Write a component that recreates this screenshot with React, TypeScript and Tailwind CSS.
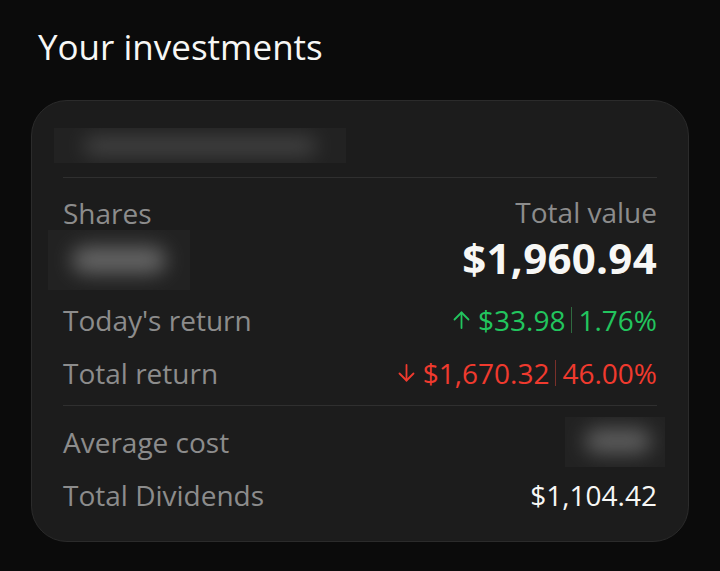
const font = { fontFamily: "'Open Sans', 'Noto Sans', sans-serif" };

function Blur({ className, blob }: { className: string; blob: string }) {
  return (
    <div className={`relative overflow-hidden bg-[#222222] ${className}`}>
      <div className={`absolute rounded-full bg-[#6f6f6f] blur-[10px] ${blob}`} />
    </div>
  );
}

function Arrow({ down }: { down?: boolean }) {
  return (
    <svg width="17" height="18" viewBox="0 0 17 18" fill="none" stroke="currentColor" strokeWidth="1.8" strokeLinecap="round" strokeLinejoin="round" className={`mr-[8px] ${down ? "rotate-180" : ""}`}>
      <path d="M8.5 17V1.5" />
      <path d="M1.5 8.5L8.5 1.5L15.5 8.5" />
    </svg>
  );
}

export default function App() {
  return (
    <div className="min-h-[571px] w-[720px] bg-[#0b0b0b] pt-[27px]" style={font}>
      <h1 className="ml-[38px] text-[35px] font-medium leading-[40px] text-[#f7f7f5]">Your investments</h1>

      <div className="mx-[31px] mt-[33px] rounded-[36px] border border-[#2b2b2b] bg-[#1c1c1c] px-[31px] pb-[30px] pt-[27px]">
        <Blur className="-ml-[9px] h-[35px] w-[292px]" blob="left-[30px] right-[30px] top-[10px] h-[16px] opacity-50" />
        <div className="mt-[14px] h-px bg-[#2f2f2f]" />

        <div className="mt-[19px] flex h-[85px] items-start justify-between">
          <div>
            <div className="text-[28px] leading-[32px] text-[#8c8c8c]">Shares</div>
            <Blur className="-ml-[15px] mt-[1px] h-[60px] w-[142px]" blob="left-[24px] right-[24px] top-[17px] h-[26px] opacity-90" />
          </div>
          <div className="-mt-[1px] text-right">
            <div className="text-[28px] leading-[32px] text-[#8c8c8c]">Total value</div>
            <div className="mt-[6px] text-[42px] font-bold leading-[48px] tracking-[0.3px] text-[#f7f7f5]">$1,960.94</div>
          </div>
        </div>

        <div className="mt-[22px] flex h-[32px] items-center justify-between text-[28px] leading-[32px]">
          <span className="text-[#8c8c8c]">Today's return</span>
          <span className="flex items-center font-medium text-[#22c55e]">
            <Arrow />$33.98
            <span className="mx-[6px] h-[26px] w-px bg-[#2f6a40]" />1.76%
          </span>
        </div>

        <div className="mt-[21px] flex h-[32px] items-center justify-between text-[28px] leading-[32px]">
          <span className="text-[#8c8c8c]">Total return</span>
          <span className="flex items-center font-medium text-[#f03a2e]">
            <Arrow down />$1,670.32
            <span className="mx-[6px] h-[26px] w-px bg-[#7a302a]" />46.00%
          </span>
        </div>

        <div className="mt-[16px] h-px bg-[#2f2f2f]" />

        <div className="mt-[20px] flex h-[32px] items-center justify-between text-[28px] leading-[32px]">
          <span className="text-[#8c8c8c]">Average cost</span>
          <Blur className="-my-[9px] -mr-[8px] h-[50px] w-[100px]" blob="left-[20px] right-[14px] top-[12px] h-[24px] opacity-80" />
        </div>

        <div className="mt-[21px] flex h-[32px] items-center justify-between text-[28px] leading-[32px]">
          <span className="text-[#8c8c8c]">Total Dividends</span>
          <span className="font-medium text-[#f7f7f5]">$1,104.42</span>
        </div>
      </div>
    </div>
  );
}
